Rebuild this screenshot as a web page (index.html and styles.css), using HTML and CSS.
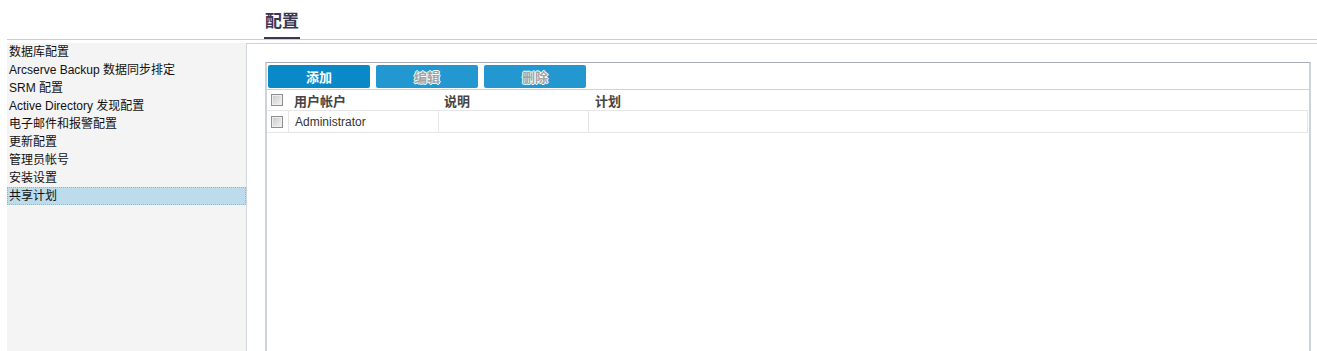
FILE: index.html
```
<!DOCTYPE html>
<html>
  <head>
    <meta charset="utf-8" />
    <title>配置</title>
    <link rel="stylesheet" href="styles.css">
  </head>
  <body>
    <div class="page">
      <div class="top">
        <span class="title">配置</span>
      </div>
      <div class="main">
        <!--左侧菜单-->
        <ul class="menu">
          <li>数据库配置</li>
          <li>Arcserve Backup 数据同步排定</li>
          <li>SRM 配置</li>
          <li>Active Directory 发现配置</li>
          <li>电子邮件和报警配置</li>
          <li>更新配置</li>
          <li>管理员帐号</li>
          <li>安装设置</li>
          <li class="active">共享计划</li>
        </ul>
        <div class="content">
          <div class="panel">
            <div class="toolbar">
              <button class="btn btn-main">添加</button>
              <button class="btn btn-off">编辑</button>
              <button class="btn btn-off">删除</button>
            </div>
            <div class="row head">
              <div class="cell c-check"><span class="check"></span></div>
              <div class="cell c-user">用户帐户</div>
              <div class="cell c-desc">说明</div>
              <div class="cell c-plan">计划</div>
            </div>
            <div class="row item">
              <div class="cell c-check"><span class="check"></span></div>
              <div class="cell c-user">Administrator</div>
              <div class="cell c-desc"></div>
              <div class="cell c-plan"></div>
            </div>
          </div>
        </div>
      </div>
    </div>
  </body>
</html>
```

FILE: styles.css
```
html,
body {
  margin: 0;
  padding: 0;
  height: 100%;
  overflow: hidden;
  background: #fff;
}
body {
  font-family: "Liberation Sans", "Noto Sans CJK SC", sans-serif;
  font-size: 12px;
  color: #111;
}
.page {
  margin-left: 7px;
  height: 100%;
  display: flex;
  flex-direction: column;
}
.top {
  height: 40px;
  border-bottom: 1px solid #cbcbd3;
  padding-left: 257px;
  box-sizing: border-box;
  display: flex;
  align-items: flex-end;
}
.title {
  display: block;
  font-size: 17px;
  font-weight: bold;
  color: #3b3652;
  line-height: 22px;
  padding: 0 1px 4px 1px;
  border-bottom: 2px solid #3b3652;
}
.main {
  flex: 1;
  display: flex;
  margin-top: 3px;
  min-height: 0;
}
.menu {
  list-style: none;
  margin: 0;
  padding: 0;
  width: 239px;
  background: #f4f4f4;
  border-right: 1px solid #d2d6de;
}
.menu li {
  height: 18px;
  line-height: 18px;
  padding-left: 2px;
  white-space: nowrap;
}
.menu li.active {
  background: #bcdcec;
  outline: 1px dotted #9db4c4;
  outline-offset: -1px;
}
.content {
  flex: 1;
  border-top: 1px solid #d2d2da;
  padding: 18px 6px 0 18px;
  display: flex;
}
.panel {
  flex: 1;
  border-top: 1px solid #a9adb9;
  border-left: 2px solid #cdd3dc;
  border-right: 2px solid #cdd3dc;
}
.toolbar {
  height: 27px;
  padding: 2px 0 0 1px;
  box-sizing: border-box;
  display: flex;
  gap: 6px;
  border-bottom: 1px solid #cfd0d8;
}
.btn {
  width: 102px;
  height: 23px;
  border: 0;
  border-radius: 2px;
  padding: 0;
  font-family: "Liberation Sans", "Noto Sans CJK SC", sans-serif;
  font-size: 13px;
  font-weight: bold;
  color: #fff;
  background: #2398d0;
}
.btn-main {
  background: #0a89c9;
}
.btn-off {
  color: #a3a3a3;
  text-shadow: 1px 0 0 #fff, -1px 0 0 #fff, 0 1px 0 #fff, 0 -1px 0 #fff;
}
.row {
  display: flex;
  margin-right: 1px;
}
.head {
  height: 20px;
  font-weight: bold;
  font-size: 13px;
  color: #444;
}
.item {
  height: 21px;
  border-top: 1px solid #e6e6e6;
  border-bottom: 1px solid #e6e6e6;
  border-right: 1px solid #e6e6e6;
  color: #333;
}
.cell {
  display: flex;
  align-items: center;
  box-sizing: border-box;
}
.item .cell + .cell {
  border-left: 1px solid #e6e6e6;
}
.c-check {
  width: 21px;
  padding-left: 4px;
}
.c-user {
  width: 150px;
  padding-left: 6px;
}
.c-desc {
  width: 150px;
  padding-left: 6px;
}
.c-plan {
  flex: 1;
  padding-left: 7px;
}
.check {
  display: block;
  width: 10px;
  height: 10px;
  border: 1px solid #8f8f8f;
  background: linear-gradient(135deg, #c8c8c8, #f4f4f4);
  box-shadow: inset 0 0 0 1px #eee;
}
```
